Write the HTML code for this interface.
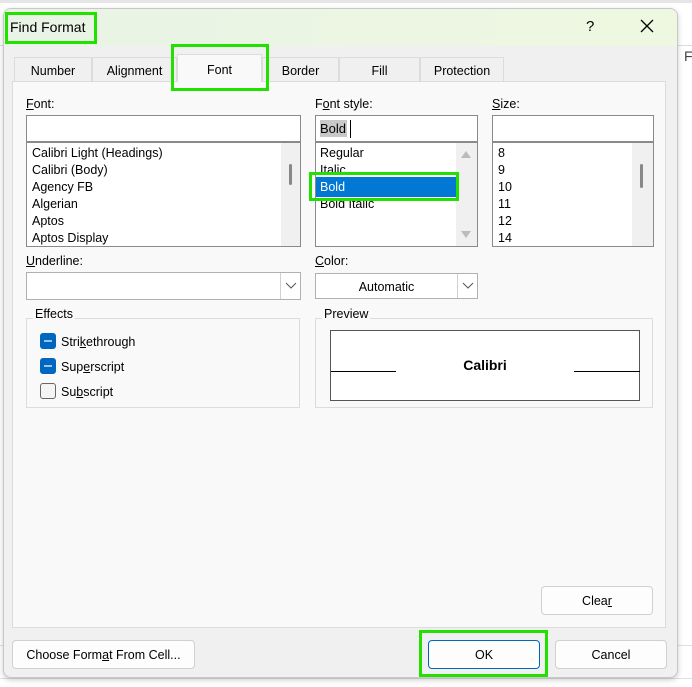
<!DOCTYPE html>
<html><head><style>
*{box-sizing:border-box;margin:0;padding:0}
body{width:692px;height:687px;position:relative;overflow:hidden;background:#fff;font-family:"Liberation Sans",sans-serif;font-size:12.5px;color:#000}
.a{position:absolute}
.box{position:absolute;background:#fff;border:1px solid #8a8a8a}
.sb{position:absolute;background:#f0f0f0}
.li{position:absolute;left:5px;line-height:17px}
.btn{position:absolute;background:#fdfdfd;border:1px solid #d0d0d0;border-radius:4px;text-align:center;line-height:29px}
.g{position:absolute;border:3px solid #22e000}
.cb{position:absolute;width:16px;height:16px;border-radius:3px;background:#0067c0}
.cb::after{content:"";position:absolute;left:4px;top:7px;width:8px;height:2px;background:#9cc4ee}
.grp{position:absolute;border:1px solid #dcdcdc}
.gl{position:absolute;background:#f9f9f9;padding:0 2px;line-height:14px}
</style></head><body>
<div class="a" style="left:0;top:45px;width:692px;height:1px;background:#dcdcdc"></div>
<div class="a" style="left:0;top:645px;width:692px;height:1px;background:#e0e0e0"></div>
<div class="a" style="left:0;top:678px;width:692px;height:1px;background:#e0e0e0"></div>
<div class="a" style="left:0;top:0;width:692px;height:3px;background:#e6e6e6"></div>
<div class="a" style="left:684px;top:48px;font-size:14px;color:#444">F</div>
<div class="a" style="left:3px;top:8px;width:675px;height:670px;background:#f0f0f0;border:1px solid #c8c8c8;border-radius:8px;overflow:hidden;box-shadow:0 2px 6px rgba(0,0,0,.2)">
 <div class="a" style="left:0;top:0;width:675px;height:37px;background:linear-gradient(90deg,#e9f3e6,#eef8e0)"></div>
</div>
<div class="a" style="left:10px;top:19px;font-size:14px">Find Format</div>
<div class="a" style="left:586px;top:18px;font-size:15px">?</div>
<svg class="a" style="left:640px;top:19px" width="14" height="14"><path d="M1 1L13 13M13 1L1 13" stroke="#000" stroke-width="1.3"/></svg>
<div class="a" style="left:12px;top:81px;width:654px;height:547px;background:#f9f9f9;border:1px solid #dcdcdc"></div>
<div class="a" style="left:14px;top:57px;width:78px;height:24px;border:1px solid #dcdcdc;border-bottom:none;text-align:center;line-height:26px;background:#f0f0f0">Number</div>
<div class="a" style="left:92px;top:57px;width:85px;height:24px;border:1px solid #dcdcdc;border-bottom:none;text-align:center;line-height:26px;background:#f0f0f0">Alignment</div>
<div class="a" style="left:177px;top:54px;width:85px;height:28px;border:1px solid #dcdcdc;border-bottom:none;text-align:center;line-height:30px;background:#f9f9f9">Font</div>
<div class="a" style="left:262px;top:57px;width:77px;height:24px;border:1px solid #dcdcdc;border-bottom:none;text-align:center;line-height:26px;background:#f0f0f0">Border</div>
<div class="a" style="left:339px;top:57px;width:81px;height:24px;border:1px solid #dcdcdc;border-bottom:none;text-align:center;line-height:26px;background:#f0f0f0">Fill</div>
<div class="a" style="left:420px;top:57px;width:84px;height:24px;border:1px solid #dcdcdc;border-bottom:none;text-align:center;line-height:26px;background:#f0f0f0">Protection</div>
<div class="a" style="left:26px;top:97px"><u>F</u>ont:</div>
<div class="a" style="left:315px;top:97px">F<u>o</u>nt style:</div>
<div class="a" style="left:492px;top:97px"><u>S</u>ize:</div>
<div class="box" style="left:26px;top:115px;width:275px;height:27px"></div>
<div class="box" style="left:26px;top:142px;width:275px;height:105px">
 <div class="sb" style="left:254px;top:0;width:19px;height:103px"></div>
 <div class="a" style="left:262px;top:21px;width:3px;height:21px;background:#888;border-radius:2px"></div>
 <div class="li" style="top:2px">Calibri Light (Headings)</div>
 <div class="li" style="top:19px">Calibri (Body)</div>
 <div class="li" style="top:36px">Agency FB</div>
 <div class="li" style="top:53px">Algerian</div>
 <div class="li" style="top:70px">Aptos</div>
 <div class="li" style="top:87px">Aptos Display</div>
</div>
<div class="box" style="left:315px;top:115px;width:163px;height:27px"><span class="a" style="left:4px;top:4px;background:#c8c8c8;line-height:17px;font-size:13px;padding-right:1px">Bold</span><span class="a" style="left:34px;top:4px;width:1px;height:18px;background:#000"></span></div>
<div class="box" style="left:315px;top:142px;width:163px;height:105px">
 <div class="sb" style="left:140px;top:0;width:21px;height:103px"></div>
 <svg class="a" style="left:144px;top:6px" width="12" height="10"><path d="M1 9L6 2L11 9Z" fill="#bbb"/></svg>
 <svg class="a" style="left:144px;top:87px" width="12" height="10"><path d="M1 1L6 8L11 1Z" fill="#bbb"/></svg>
 <div class="li" style="top:2px;left:4px">Regular</div>
 <div class="li" style="top:19px;left:4px">Italic</div>
 <div class="a" style="left:0;top:34px;width:140px;height:20px;background:#0078d4;color:#fff;padding-left:4px;line-height:20px">Bold</div>
 <div class="li" style="top:53px;left:4px">Bold Italic</div>
</div>
<div class="box" style="left:492px;top:115px;width:162px;height:27px"></div>
<div class="box" style="left:492px;top:142px;width:162px;height:105px">
 <div class="sb" style="left:139px;top:0;width:21px;height:103px"></div>
 <div class="a" style="left:147px;top:21px;width:3px;height:24px;background:#888;border-radius:2px"></div>
 <div class="li" style="top:2px">8</div><div class="li" style="top:19px">9</div><div class="li" style="top:36px">10</div>
 <div class="li" style="top:53px">11</div><div class="li" style="top:70px">12</div><div class="li" style="top:87px">14</div>
</div>
<div class="a" style="left:26px;top:254px"><u>U</u>nderline:</div>
<div class="a" style="left:315px;top:254px"><u>C</u>olor:</div>
<div class="box" style="left:26px;top:272px;width:275px;height:28px;border-color:#b0b0b0">
 <div class="a" style="left:253px;top:0;width:1px;height:26px;background:#d0d0d0"></div>
 <svg class="a" style="left:258px;top:9px" width="12" height="8"><path d="M1 1L6 6L11 1" stroke="#555" fill="none"/></svg>
</div>
<div class="box" style="left:315px;top:273px;width:163px;height:26px;border-color:#b0b0b0">
 <div class="a" style="left:0;top:6px;width:141px;text-align:center">Automatic</div>
 <div class="a" style="left:141px;top:0;width:1px;height:24px;background:#d0d0d0"></div>
 <svg class="a" style="left:146px;top:8px" width="12" height="8"><path d="M1 1L6 6L11 1" stroke="#555" fill="none"/></svg>
</div>
<div class="grp" style="left:26px;top:318px;width:274px;height:90px"></div>
<div class="gl" style="left:33px;top:307px">Effects</div>
<div class="cb" style="left:40px;top:333px"></div><div class="a" style="left:61px;top:335px">Stri<u>k</u>ethrough</div>
<div class="cb" style="left:40px;top:358px"></div><div class="a" style="left:61px;top:360px">Sup<u>e</u>rscript</div>
<div class="a" style="left:40px;top:383px;width:16px;height:16px;border:1px solid #666;border-radius:3px;background:#f4f4f4"></div><div class="a" style="left:61px;top:385px">Su<u>b</u>script</div>
<div class="grp" style="left:315px;top:318px;width:338px;height:90px"></div>
<div class="gl" style="left:322px;top:307px">Preview</div>
<div class="a" style="left:330px;top:330px;width:310px;height:71px;background:#fff;border:1px solid #555">
 <div class="a" style="left:0;top:40px;width:65px;height:1px;background:#000"></div>
 <div class="a" style="left:243px;top:40px;width:66px;height:1px;background:#000"></div>
 <div class="a" style="left:0;top:26px;width:308px;text-align:center;font-weight:bold;font-size:14px">Calibri</div>
</div>
<div class="btn" style="left:541px;top:586px;width:112px;height:29px">Clea<u>r</u></div>
<div class="btn" style="left:12px;top:640px;width:183px;height:29px">Choose Form<u>a</u>t From Cell...</div>
<div class="btn" style="left:428px;top:640px;width:112px;height:29px;border-color:#0067c0">OK</div>
<div class="btn" style="left:555px;top:640px;width:112px;height:29px">Cancel</div>
<div class="g" style="left:5px;top:12px;width:92px;height:32px"></div>
<div class="g" style="left:171px;top:44px;width:98px;height:47px"></div>
<div class="g" style="left:309px;top:172px;width:150px;height:29px"></div>
<div class="g" style="left:419px;top:630px;width:129px;height:47px"></div>
</body></html>
